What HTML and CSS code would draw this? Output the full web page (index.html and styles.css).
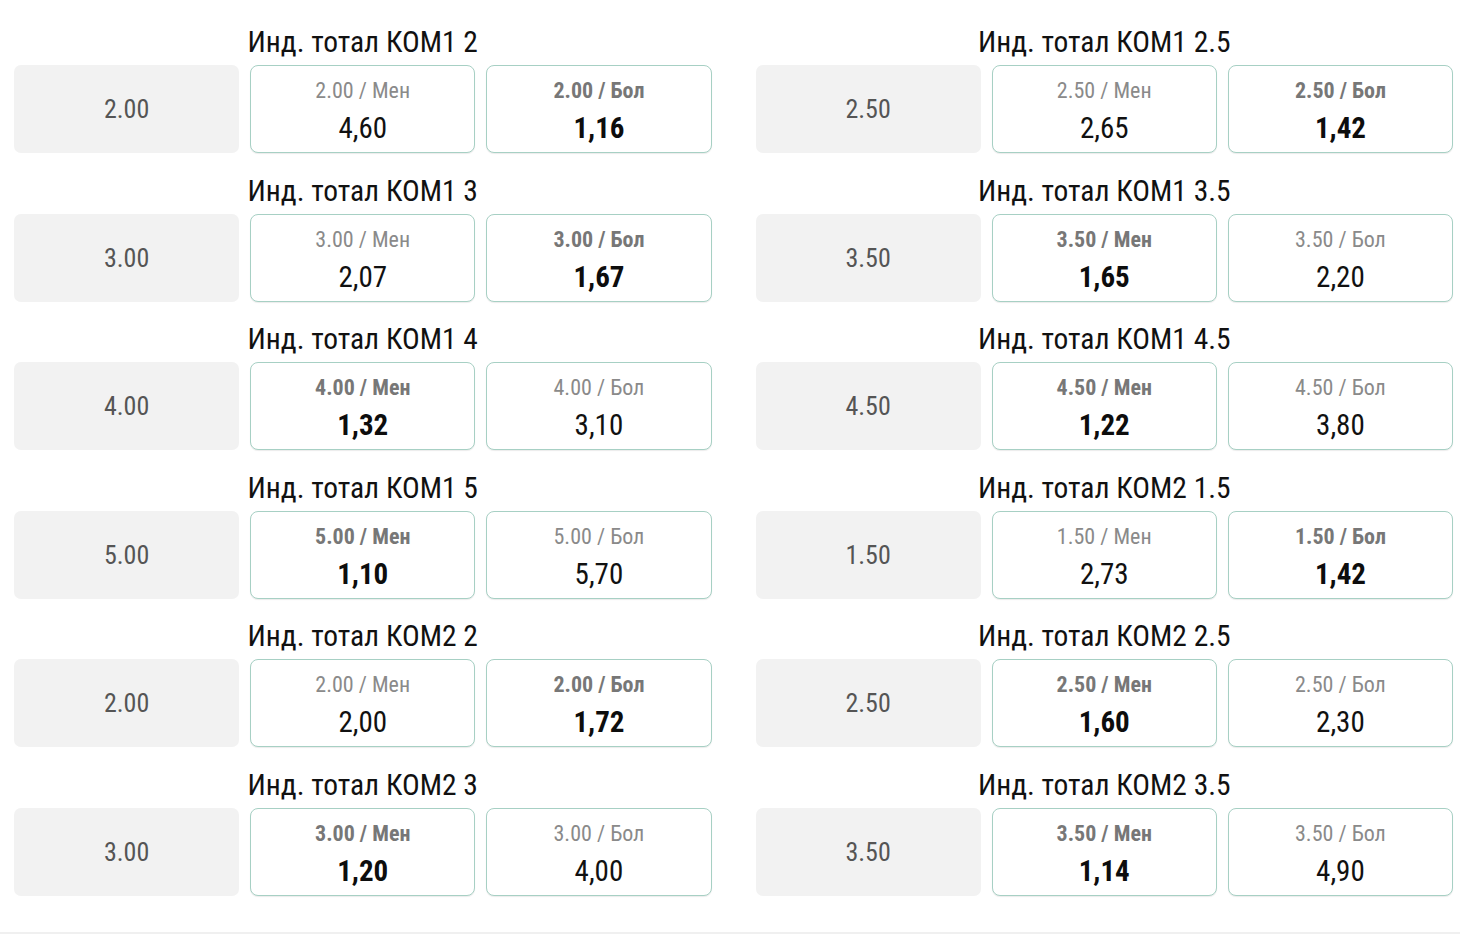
FILE: index.html
```html
<!DOCTYPE html>
<html lang="ru">
<head>
<meta charset="utf-8">
<link rel="stylesheet" href="styles.css">
</head>
<body>
<div class="page">
  <div class="col">
    <div class="block"><div class="title">Инд. тотал КОМ1 2</div><div class="row"><div class="base">2.00</div><div class="btn"><span class="lbl">2.00 / Мен</span><span class="odd">4,60</span></div><div class="btn fav"><span class="lbl">2.00 / Бол</span><span class="odd">1,16</span></div></div></div>
    <div class="block"><div class="title">Инд. тотал КОМ1 3</div><div class="row"><div class="base">3.00</div><div class="btn"><span class="lbl">3.00 / Мен</span><span class="odd">2,07</span></div><div class="btn fav"><span class="lbl">3.00 / Бол</span><span class="odd">1,67</span></div></div></div>
    <div class="block"><div class="title">Инд. тотал КОМ1 4</div><div class="row"><div class="base">4.00</div><div class="btn fav"><span class="lbl">4.00 / Мен</span><span class="odd">1,32</span></div><div class="btn"><span class="lbl">4.00 / Бол</span><span class="odd">3,10</span></div></div></div>
    <div class="block"><div class="title">Инд. тотал КОМ1 5</div><div class="row"><div class="base">5.00</div><div class="btn fav"><span class="lbl">5.00 / Мен</span><span class="odd">1,10</span></div><div class="btn"><span class="lbl">5.00 / Бол</span><span class="odd">5,70</span></div></div></div>
    <div class="block"><div class="title">Инд. тотал КОМ2 2</div><div class="row"><div class="base">2.00</div><div class="btn"><span class="lbl">2.00 / Мен</span><span class="odd">2,00</span></div><div class="btn fav"><span class="lbl">2.00 / Бол</span><span class="odd">1,72</span></div></div></div>
    <div class="block"><div class="title">Инд. тотал КОМ2 3</div><div class="row"><div class="base">3.00</div><div class="btn fav"><span class="lbl">3.00 / Мен</span><span class="odd">1,20</span></div><div class="btn"><span class="lbl">3.00 / Бол</span><span class="odd">4,00</span></div></div></div>
  </div>
  <div class="col">
    <div class="block"><div class="title">Инд. тотал КОМ1 2.5</div><div class="row"><div class="base">2.50</div><div class="btn"><span class="lbl">2.50 / Мен</span><span class="odd">2,65</span></div><div class="btn fav"><span class="lbl">2.50 / Бол</span><span class="odd">1,42</span></div></div></div>
    <div class="block"><div class="title">Инд. тотал КОМ1 3.5</div><div class="row"><div class="base">3.50</div><div class="btn fav"><span class="lbl">3.50 / Мен</span><span class="odd">1,65</span></div><div class="btn"><span class="lbl">3.50 / Бол</span><span class="odd">2,20</span></div></div></div>
    <div class="block"><div class="title">Инд. тотал КОМ1 4.5</div><div class="row"><div class="base">4.50</div><div class="btn fav"><span class="lbl">4.50 / Мен</span><span class="odd">1,22</span></div><div class="btn"><span class="lbl">4.50 / Бол</span><span class="odd">3,80</span></div></div></div>
    <div class="block"><div class="title">Инд. тотал КОМ2 1.5</div><div class="row"><div class="base">1.50</div><div class="btn"><span class="lbl">1.50 / Мен</span><span class="odd">2,73</span></div><div class="btn fav"><span class="lbl">1.50 / Бол</span><span class="odd">1,42</span></div></div></div>
    <div class="block"><div class="title">Инд. тотал КОМ2 2.5</div><div class="row"><div class="base">2.50</div><div class="btn fav"><span class="lbl">2.50 / Мен</span><span class="odd">1,60</span></div><div class="btn"><span class="lbl">2.50 / Бол</span><span class="odd">2,30</span></div></div></div>
    <div class="block"><div class="title">Инд. тотал КОМ2 3.5</div><div class="row"><div class="base">3.50</div><div class="btn fav"><span class="lbl">3.50 / Мен</span><span class="odd">1,14</span></div><div class="btn"><span class="lbl">3.50 / Бол</span><span class="odd">4,90</span></div></div></div>
  </div>
</div>
<div class="footer-line"></div>
</body>
</html>
```
FILE: styles.css
```css
* { box-sizing: border-box; }
html, body { margin: 0; padding: 0; background: #ffffff; }
body {
  font-family: "Roboto Condensed", Roboto, "Liberation Sans", sans-serif;
  color: #111;
  overflow: hidden;
}
.page {
  display: grid;
  grid-template-columns: 1fr 1fr;
  column-gap: 44px;
  padding: 27px 7px 36px 14px;
}
.col {
  display: flex;
  flex-direction: column;
  gap: 22.5px;
}
.block {
  display: grid;
  grid-template-columns: repeat(3, 1fr);
  column-gap: 11px;
}
.title {
  grid-column: 2;
  justify-self: center;
  white-space: nowrap;
  font-size: 29.5px;
  line-height: 30px;
  height: 30px;
  margin-bottom: 8px;
  color: #111;
}
.row {
  grid-column: 1 / 4;
  display: grid;
  grid-template-columns: repeat(3, 1fr);
  column-gap: 11px;
  height: 88px;
}
.base {
  background: #f2f2f2;
  border-radius: 7px;
  display: flex;
  align-items: center;
  justify-content: center;
  font-size: 26px;
  color: #555;
}
.btn {
  background: #fff;
  border: 1px solid #a7d0c4;
  border-radius: 8px;
  box-shadow: 0 1px 1px rgba(0, 0, 0, 0.08);
  display: flex;
  flex-direction: column;
  align-items: center;
  justify-content: center;
  gap: 10px;
  padding-top: 4px;
}
.lbl {
  font-size: 22px;
  line-height: 24px;
  color: #8a8a8a;
}
.odd {
  font-size: 29px;
  line-height: 30px;
  color: #111;
}
.fav .lbl { font-weight: 700; color: #777; }
.fav .odd { font-weight: 700; color: #0d0d0d; }
.footer-line {
  height: 3px;
  background: #f0f0f0;
}
```
